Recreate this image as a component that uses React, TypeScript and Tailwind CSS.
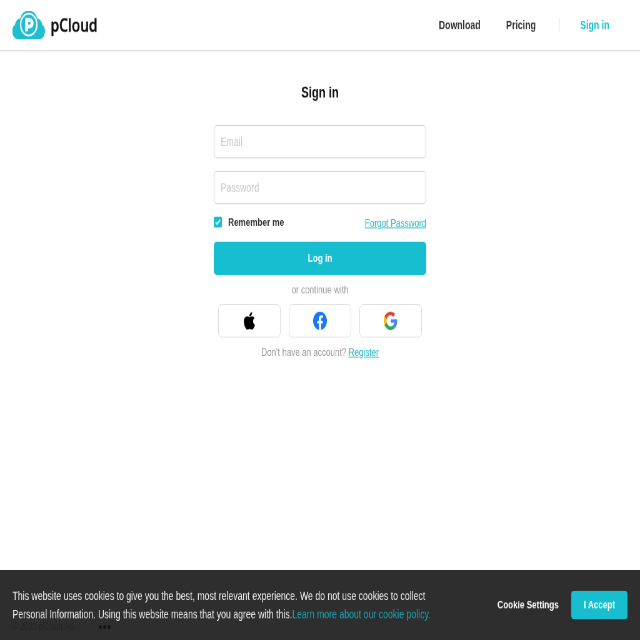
import type { ReactNode } from "react";

function Logo() {
  return (
    <div className="flex items-center">
      <svg width="52" height="34" viewBox="0 0 52 34">
        <path
          d="M9 34a9.500 9.500 0 0 1-5-17.500A8.500 8.500 0 0 1 12 9.500A14.500 13.500 0 0 1 40 9.500A8 8 0 0 1 47.500 16.500A9.500 9.500 0 0 1 43 34Z"
          fill="#20bed0"
        />
        <circle cx="26" cy="16.500" r="13" fill="#20bed0" stroke="#fff" strokeWidth="2.200" />
        <path d="M22.500 24.500V11h5a3.800 3.800 0 0 1 0 7.800h-5" fill="none" stroke="#fff" strokeWidth="4.600" />
      </svg>
      <span className="-mt-[3px] ml-[9px] font-['Noto_Sans',sans-serif] text-[22px] font-medium leading-[34px] tracking-[0.1px] text-[#111] [-webkit-text-stroke:0.6px_#111]">
        pCloud
      </span>
    </div>
  );
}

function Social({ label, children }: { label: string; children: ReactNode }) {
  return (
    <button
      aria-label={label}
      className="flex h-10 w-[100px] items-center justify-center rounded-[6px] border border-[#dedede] bg-white"
    >
      {children}
    </button>
  );
}

export default function App() {
  return (
    <div className="h-[640px] w-[640px] overflow-hidden bg-white">
      <div className="relative flex h-[768px] w-[1024px] origin-top-left scale-x-[0.625] scale-y-[0.83333] flex-col bg-white font-['Liberation_Sans',Arial,sans-serif] text-[13px] will-change-transform">
        <header className="flex h-[61px] shrink-0 items-center border-b border-[#dcdcdc] pr-[49px] pl-5 shadow-[0_1px_3px_rgba(0,0,0,0.08)]">
          <Logo />
          <nav className="ml-auto flex items-center text-[14px] font-bold text-[#333]">
            <a>Download</a>
            <a className="ml-[41px]">Pricing</a>
            <span className="mr-[33px] ml-[37px] h-4 w-px bg-[#d4d4d4]" />
            <a className="text-[#20bed0]">Sign in</a>
          </nav>
        </header>

        <main className="mx-auto flex w-[340px] flex-col pt-[38px]">
          <h1 className="text-center text-[18px] leading-6 font-bold text-[#111]">Sign in</h1>
          <input
            placeholder="Email"
            className="mt-[27px] h-10 rounded-[5px] border border-[#ccc] px-[10px] text-[14px] placeholder:text-[#c8c8c8]"
          />
          <input
            placeholder="Password"
            className="mt-[15px] h-10 rounded-[5px] border border-[#ccc] px-[10px] text-[14px] placeholder:text-[#c8c8c8]"
          />
          <div className="mt-[12px] flex h-5 items-center">
            <span className="-mt-px flex size-[13px] items-center justify-center rounded-[2px] bg-[#17bed0]">
              <svg width="9" height="9" viewBox="0 0 9 9" fill="none" stroke="#fff" strokeWidth="1.800">
                <path d="M1 4.800L3.300 7L8 1.800" />
              </svg>
            </span>
            <span className="ml-[10px] font-bold text-[#333]">Remember me</span>
            <a className="mt-[2px] ml-auto text-[#20b5c6] underline">Forgot Password</a>
          </div>
          <button className="mt-[13px] h-10 rounded-[5px] bg-[#17bed0] font-bold text-white">Log in</button>
          <p className="mt-2 text-center leading-5 text-[#999]">or continue with</p>
          <div className="mt-[7px] flex justify-center gap-[13px]">
            <Social label="Apple">
              <svg width="20" height="24" viewBox="0 0 384 512" fill="#000">
                <path d="M318.700 268.700c-.2-36.700 16.400-64.400 50-84.800-18.800-26.900-47.200-41.700-84.700-44.600-35.500-2.800-74.300 20.700-88.500 20.700-15 0-49.400-19.700-76.400-19.700C63.300 141.200 4 184.800 4 273.500q0 39.300 14.400 81.200c12.800 36.700 59 126.700 107.200 125.200 25.200-.6 43-17.900 75.800-17.900 31.800 0 48.300 17.900 76.400 17.900 48.600-.7 90.400-82.500 102.600-119.300-65.200-30.700-61.700-90-61.700-91.900zm-56.600-164.200c27.300-32.400 24.800-61.900 24-72.500-24.100 1.400-52 16.400-67.900 34.900-17.500 19.800-27.800 44.300-25.600 71.900 26.100 2 49.900-11.400 69.500-34.300z" />
              </svg>
            </Social>
            <Social label="Facebook">
              <svg width="22" height="22" viewBox="0 0 24 24">
                <circle cx="12" cy="12" r="12" fill="#1877f2" />
                <path
                  d="M10.100 23.900v-8.400H7.100V12h3V9.400c0-3 1.800-4.700 4.500-4.700 1.300 0 2.700.2 2.700.2v3h-1.500c-1.500 0-2 .9-2 1.900V12h3.400l-.5 3.500h-2.900v8.400z"
                  fill="#fff"
                />
              </svg>
            </Social>
            <Social label="Google">
              <svg width="22" height="22" viewBox="0 0 48 48">
                <path fill="#EA4335" d="M24 9.500c3.540 0 6.710 1.220 9.210 3.600l6.850-6.850C35.900 2.380 30.470 0 24 0 14.620 0 6.510 5.380 2.560 13.220l7.980 6.190C12.430 13.720 17.740 9.500 24 9.500z" />
                <path fill="#4285F4" d="M46.980 24.550c0-1.570-.15-3.090-.38-4.550H24v9.020h12.940c-.58 2.960-2.260 5.480-4.780 7.180l7.730 6c4.510-4.180 7.090-10.360 7.090-17.650z" />
                <path fill="#FBBC05" d="M10.530 28.590c-.48-1.450-.76-2.990-.76-4.590s.27-3.140.76-4.590l-7.980-6.190C.92 16.460 0 20.120 0 24c0 3.880.92 7.540 2.560 10.780l7.970-6.190z" />
                <path fill="#34A853" d="M24 48c6.480 0 11.930-2.130 15.890-5.810l-7.730-6c-2.150 1.450-4.920 2.300-8.160 2.300-6.260 0-11.570-4.220-13.470-9.910l-7.980 6.190C6.510 42.620 14.620 48 24 48z" />
              </svg>
            </Social>
          </div>
          <p className="mt-2 text-center leading-5 text-[#999]">
            Don't have an account? <a className="text-[#20b5c6] underline">Register</a>
          </p>
        </main>

        <footer className="mt-auto flex h-[32px] items-center pl-5 text-[12px] text-[#999]">
          <span className="w-[138px]">© 2023 pCloud AG</span>
          <span className="flex gap-[2px]">
            <i className="size-[5px] rounded-full bg-black" />
            <i className="size-[5px] rounded-full bg-black" />
            <i className="size-[5px] rounded-full bg-black" />
          </span>
        </footer>

        <section className="absolute inset-x-0 bottom-0 flex h-[84px] items-center bg-[#171717]/90 pr-5 pl-5">
          <p className="text-[14px] leading-[22px] whitespace-nowrap text-[#eee]">
            This website uses cookies to give you the best, most relevant experience. We do not use cookies to collect
            <br />
            Personal Information. Using this website means that you agree with this.
            <a className="text-[#17a5b3]">Learn more about our cookie policy.</a>
          </p>
          <button className="ml-auto font-bold text-white">Cookie Settings</button>
          <button className="ml-5 h-[34px] w-[90px] rounded-[4px] bg-[#17bed0] font-bold text-white">I Accept</button>
        </section>
      </div>
    </div>
  );
}
